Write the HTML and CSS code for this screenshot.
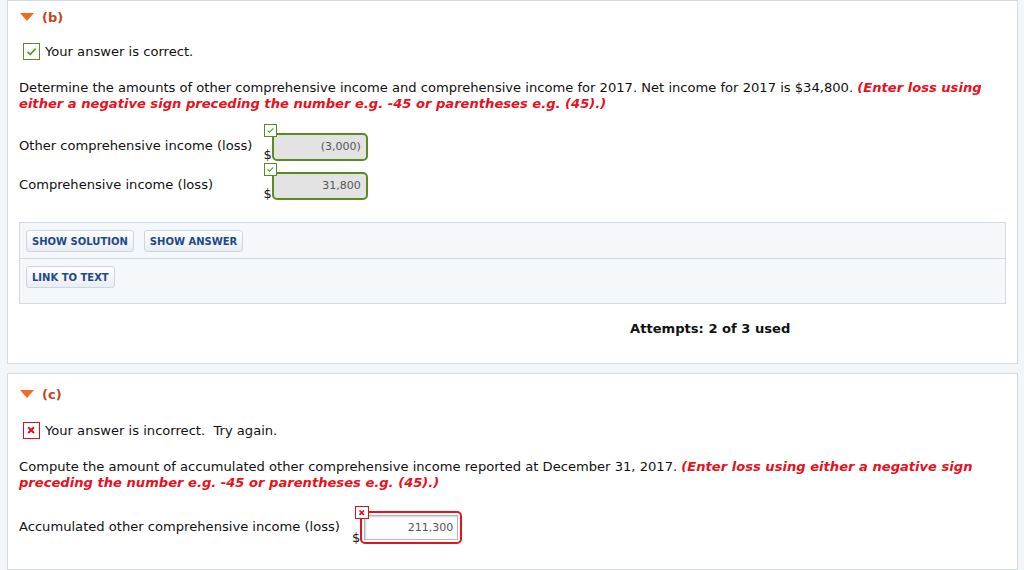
FILE: index.html
```html
<!DOCTYPE html>
<html>
<head>
<meta charset="utf-8">
<link rel="stylesheet" href="styles.css">
</head>
<body>
<div class="page">
  <section class="card card-first">
    <div class="part-head"><span class="tri"></span><span class="part-label">(b)</span></div>
    <div class="feedback"><span class="mark mark-ok"><svg viewBox="0 0 17 17" width="17" height="17"><path d="M4.5 8.8 L7.3 11.4 L12.6 5.6" fill="none" stroke="#4f9a1e" stroke-width="1.6"/></svg></span>Your answer is correct.</div>
    <p class="question">Determine the amounts of other comprehensive income and comprehensive income for 2017. Net income for 2017 is $34,800. <em class="hint">(Enter loss using either a negative sign preceding the number e.g. -45 or parentheses e.g. (45).)</em></p>
    <div class="answers">
      <span class="row-label">Other comprehensive income (loss)</span>
      <span class="field"><span class="cur">$</span><span class="input input-ok">(3,000)</span><span class="mini mini-ok"><svg viewBox="0 0 13 13" width="11" height="11"><path d="M3 6.6 L5.3 8.6 L9.8 4" fill="none" stroke="#4f9a1e" stroke-width="1.3"/></svg></span></span>
      <span class="row-label">Comprehensive income (loss)</span>
      <span class="field"><span class="cur">$</span><span class="input input-ok">31,800</span><span class="mini mini-ok"><svg viewBox="0 0 13 13" width="11" height="11"><path d="M3 6.6 L5.3 8.6 L9.8 4" fill="none" stroke="#4f9a1e" stroke-width="1.3"/></svg></span></span>
    </div>
    <div class="tools">
      <div class="tool-row"><button class="btn">SHOW SOLUTION</button><button class="btn">SHOW ANSWER</button></div>
      <div class="tool-row tool-row-last"><button class="btn">LINK TO TEXT</button></div>
    </div>
    <div class="attempts">Attempts: 2 of 3 used</div>
  </section>

  <section class="card card-last">
    <div class="part-head"><span class="tri"></span><span class="part-label">(c)</span></div>
    <div class="feedback"><span class="mark mark-bad"><svg viewBox="0 0 17 17" width="17" height="17"><path d="M5.2 5.2 L11 11 M11 5.2 L5.2 11" fill="none" stroke="#d9141e" stroke-width="2"/></svg></span>Your answer is incorrect.&nbsp; Try again.</div>
    <p class="question">Compute the amount of accumulated other comprehensive income reported at December 31, 2017. <em class="hint">(Enter loss using either a negative sign preceding the number e.g. -45 or parentheses e.g. (45).)</em></p>
    <div class="answers answers-c">
      <span class="row-label row-label-c">Accumulated other comprehensive income (loss)</span>
      <span class="field field-c"><span class="cur">$</span><span class="input-bad"><span class="input-bad-inner">211,300</span></span><span class="mini mini-bad"><svg viewBox="0 0 13 13" width="12" height="12"><path d="M3.8 3.8 L8.6 8.6 M8.6 3.8 L3.8 8.6" fill="none" stroke="#d9141e" stroke-width="1.8"/></svg></span></span>
    </div>
    <div class="divider"></div>
  </section>
</div>
</body>
</html>
```
FILE: styles.css
```css
html, body {
  margin: 0;
  padding: 0;
}
body {
  background: #f3f6f9;
  font-family: "DejaVu Sans", Verdana, sans-serif;
  font-size: 13.1px;
  color: #111;
  width: 1024px;
  height: 570px;
  overflow: hidden;
}
.page {
  padding-left: 7px;
}
.card {
  background: #fff;
  border: 1px solid #d3dbe4;
  padding: 11px 11px 0 11px;
  box-sizing: border-box;
  width: 1011px;
  margin-bottom: 9px;
}
.card-first {
  padding-top: 7px;
  padding-bottom: 26px;
}
.card-last {
  border-bottom: none;
  margin-bottom: 0;
}
.part-head {
  display: flex;
  align-items: center;
  height: 18px;
  gap: 8px;
}
.tri {
  width: 0;
  height: 0;
  margin-left: 1px;
  border-left: 7px solid transparent;
  border-right: 7px solid transparent;
  border-top: 8px solid #f26a24;
}
.part-label {
  color: #c2461c;
  font-weight: bold;
  font-size: 13px;
}
.feedback {
  display: flex;
  align-items: center;
  margin-top: 17px;
  height: 17px;
  line-height: 17px;
}
.card-last .feedback {
  margin-top: 19px;
}
.mark {
  width: 17px;
  height: 17px;
  box-sizing: border-box;
  margin-left: 4px;
  margin-right: 5px;
  display: flex;
  align-items: center;
  justify-content: center;
  background: #fff;
}
.mark svg {
  display: block;
  flex: none;
}
.mark-ok {
  border: 1.5px solid #5d8b27;
}
.mark-bad {
  border: 1.5px solid #d4141f;
}
.question {
  margin: 20px 0 0 0;
  line-height: 16px;
  padding-right: 10px;
}
.hint {
  color: #e8101c;
  font-weight: bold;
  font-style: italic;
}
.answers {
  display: grid;
  grid-template-columns: max-content max-content;
  column-gap: 11px;
  row-gap: 2px;
  margin-top: 12px;
}
.row-label {
  align-self: end;
  margin-bottom: 7px;
  line-height: 16px;
}
.field {
  position: relative;
  display: flex;
  align-items: flex-end;
  padding-top: 9px;
}
.cur {
  font-size: 13px;
  line-height: 13px;
}
.input {
  box-sizing: border-box;
  width: 96px;
  height: 28px;
  line-height: 24px;
  text-align: right;
  font-size: 11px;
  color: #555;
  padding-right: 5px;
  background: #e3e3e3;
  border-radius: 5px;
}
.input-ok {
  border: 2px solid #5b8a23;
}
.mini {
  position: absolute;
  top: 0;
  left: 1px;
  width: 13px;
  height: 13px;
  box-sizing: border-box;
  background: #fff;
  display: flex;
  align-items: center;
  justify-content: center;
}
.mini svg {
  display: block;
  flex: none;
}
.mini-ok {
  border: 1px solid #5b8a23;
}
.answers-c {
  margin-top: 15px;
  column-gap: 12px;
}
.row-label-c {
  margin-bottom: 9px;
}
.field-c {
  padding-top: 5px;
}
.input-bad {
  box-sizing: border-box;
  width: 102px;
  height: 33px;
  border: 2px solid #e2141e;
  border-radius: 5px;
  padding: 2px;
  background: #fff;
}
.input-bad-inner {
  box-sizing: border-box;
  display: block;
  height: 100%;
  border: 1px solid #b5b5b5;
  box-shadow: inset 1px 1px 2px #d0d0d0;
  text-align: right;
  font-size: 11px;
  color: #555;
  line-height: 23px;
  padding-right: 4px;
}
.mini-bad {
  left: 3px;
  top: 0;
  width: 14px;
  height: 13px;
  border: 1px solid #d4141f;
}
.tools {
  margin-top: 22px;
  border: 1px solid #d3dbe4;
  background: #f5f8fb;
}
.tool-row {
  display: flex;
  gap: 10px;
  padding: 7px 6px 6px 6px;
  border-bottom: 1px solid #d3dbe4;
}
.tool-row-last {
  border-bottom: none;
  padding-bottom: 15px;
}
.btn {
  font-family: "DejaVu Sans", Verdana, sans-serif;
  font-weight: bold;
  font-size: 10px;
  color: #23488a;
  height: 22px;
  padding: 0 5px;
  border: 1px solid #cdd6e0;
  border-radius: 3px;
  background: linear-gradient(#fdfdfe, #e9eef3);
}
.attempts {
  margin-top: 17px;
  padding-left: 611px;
  font-weight: bold;
  line-height: 16px;
}
.divider {
  margin-top: 25px;
  border-top: 1px solid #d3dbe4;
  margin-left: -11px;
  margin-right: -11px;
  height: 0;
}
```
